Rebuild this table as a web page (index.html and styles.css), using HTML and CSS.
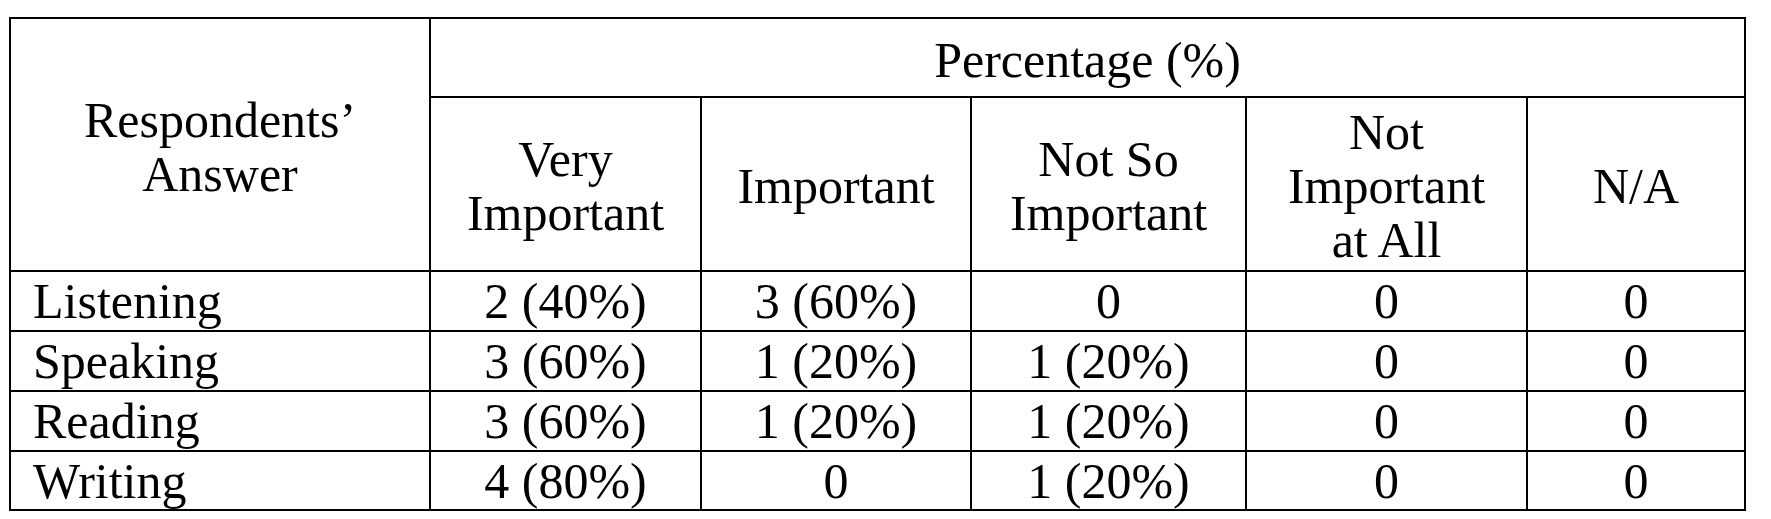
FILE: index.html
```html
<!DOCTYPE html>
<html lang="en">
<head>
<meta charset="utf-8">
<title>Respondents' Answer</title>
<link rel="stylesheet" href="styles.css">
</head>
<body>
<div class="page">
  <table class="survey">
    <colgroup>
      <col class="c-label">
      <col class="c-very">
      <col class="c-imp">
      <col class="c-notso">
      <col class="c-notall">
      <col class="c-na">
    </colgroup>
    <thead>
      <tr class="r-group">
        <th rowspan="2" class="head">Respondents’<br>Answer</th>
        <th colspan="5" class="head">Percentage (%)</th>
      </tr>
      <tr class="r-sub">
        <th class="head">Very<br>Important</th>
        <th class="head">Important</th>
        <th class="head">Not So<br>Important</th>
        <th class="head">Not<br>Important<br>at All</th>
        <th class="head">N/A</th>
      </tr>
    </thead>
    <tbody>
      <tr class="r-data">
        <td class="label">Listening</td>
        <td>2 (40%)</td>
        <td>3 (60%)</td>
        <td>0</td>
        <td>0</td>
        <td>0</td>
      </tr>
      <tr class="r-data">
        <td class="label">Speaking</td>
        <td>3 (60%)</td>
        <td>1 (20%)</td>
        <td>1 (20%)</td>
        <td>0</td>
        <td>0</td>
      </tr>
      <tr class="r-data">
        <td class="label">Reading</td>
        <td>3 (60%)</td>
        <td>1 (20%)</td>
        <td>1 (20%)</td>
        <td>0</td>
        <td>0</td>
      </tr>
      <tr class="r-data r-last">
        <td class="label">Writing</td>
        <td>4 (80%)</td>
        <td>0</td>
        <td>1 (20%)</td>
        <td>0</td>
        <td>0</td>
      </tr>
    </tbody>
  </table>
</div>
</body>
</html>
```

FILE: styles.css
```css
html, body {
  margin: 0;
  padding: 0;
  background: #ffffff;
}

.page {
  padding: 17px 0 0 9px;
}

.survey {
  border-collapse: separate;
  border-spacing: 0;
  table-layout: fixed;
  width: 1737px;
  border-top: 2px solid #000;
  border-left: 2px solid #000;
  font-family: "Liberation Serif", "Times New Roman", serif;
  font-size: 50px;
  line-height: 54px;
  color: #000;
}

.c-label { width: 420px; }
.c-very { width: 271px; }
.c-imp { width: 270px; }
.c-notso { width: 275px; }
.c-notall { width: 281px; }
.c-na { width: 218px; }

.survey th,
.survey td {
  box-sizing: border-box;
  border-right: 2px solid #000;
  border-bottom: 2px solid #000;
  padding: 0;
  text-align: center;
  vertical-align: middle;
  font-weight: normal;
  white-space: nowrap;
}

.survey th.head {
  padding-top: 4px;
}

.r-group { height: 79px; }
.r-sub { height: 174px; }
.r-data { height: 60px; }
.r-last { height: 59px; }

.survey td.label {
  text-align: left;
  padding-left: 22px;
}
```
